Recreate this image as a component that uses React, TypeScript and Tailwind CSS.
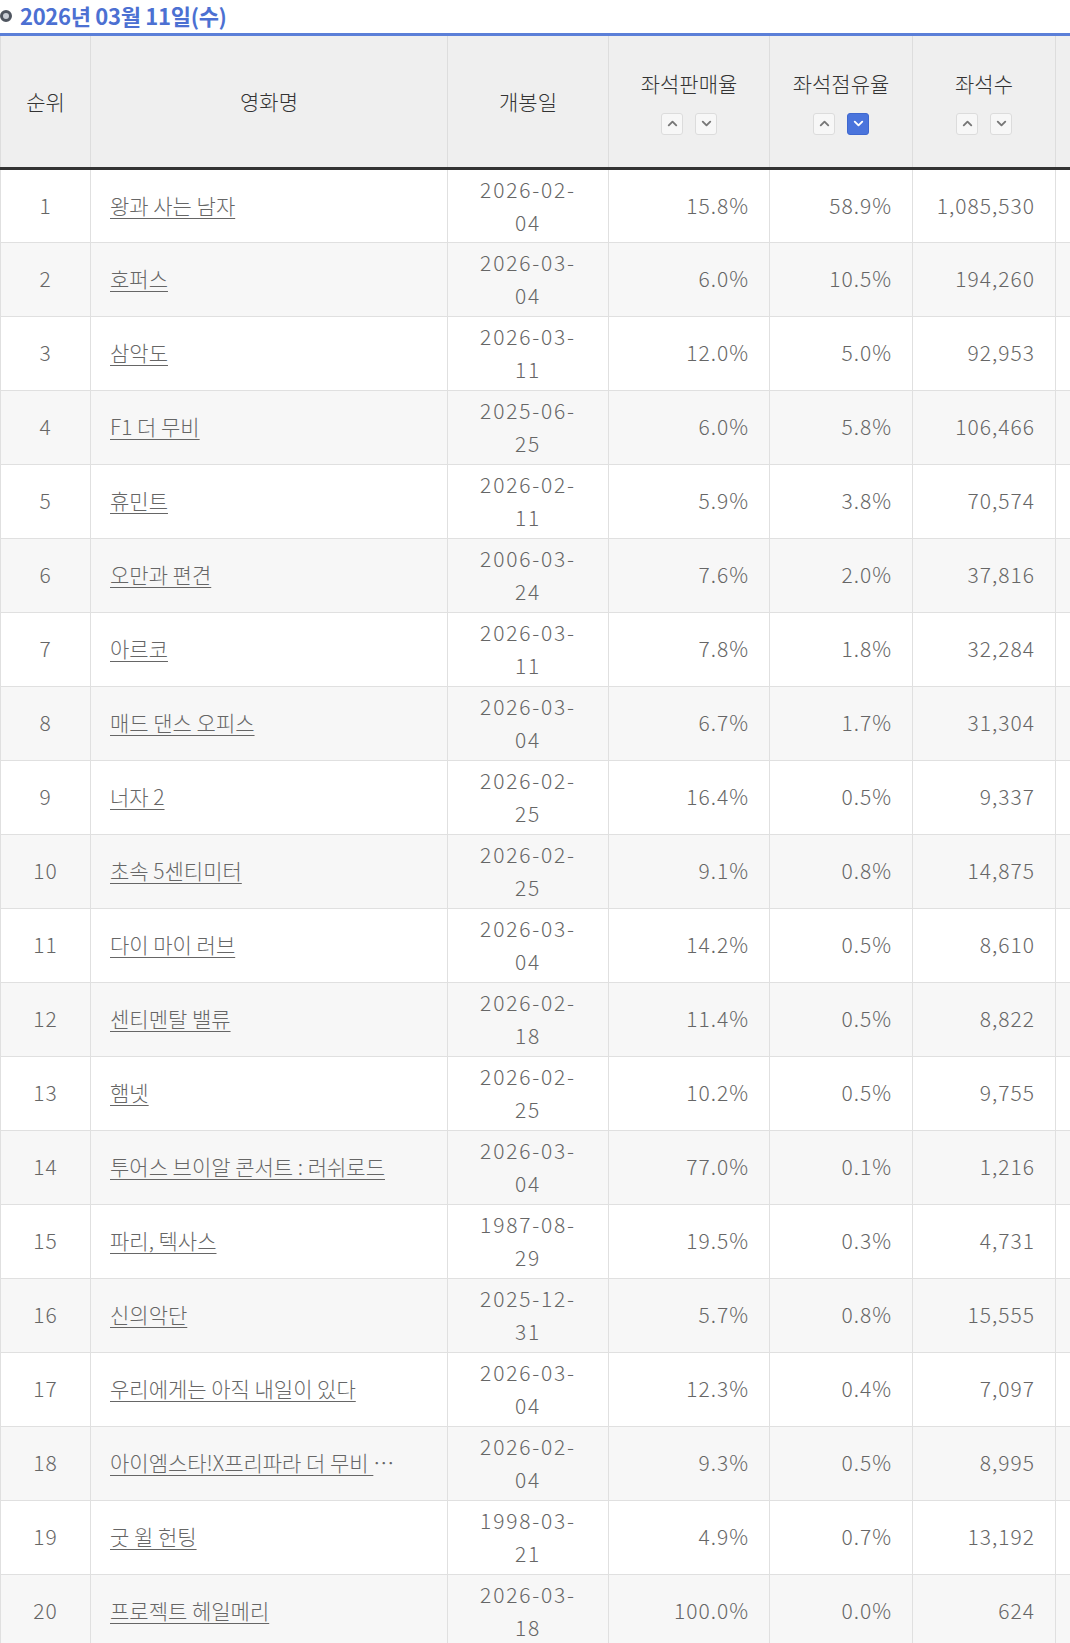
import { ChevronDown, ChevronUp } from 'lucide-react';

interface Movie {
  rank: number;
  title: string;
  date: [string, string];
  sales: string;
  share: string;
  seats: string;
  cut?: boolean;
}

const movies: Movie[] = [
  { rank: 1, title: '왕과 사는 남자', date: ['2026-02-', '04'], sales: '15.8%', share: '58.9%', seats: '1,085,530' },
  { rank: 2, title: '호퍼스', date: ['2026-03-', '04'], sales: '6.0%', share: '10.5%', seats: '194,260' },
  { rank: 3, title: '삼악도', date: ['2026-03-', '11'], sales: '12.0%', share: '5.0%', seats: '92,953' },
  { rank: 4, title: 'F1 더 무비', date: ['2025-06-', '25'], sales: '6.0%', share: '5.8%', seats: '106,466' },
  { rank: 5, title: '휴민트', date: ['2026-02-', '11'], sales: '5.9%', share: '3.8%', seats: '70,574' },
  { rank: 6, title: '오만과 편견', date: ['2006-03-', '24'], sales: '7.6%', share: '2.0%', seats: '37,816' },
  { rank: 7, title: '아르코', date: ['2026-03-', '11'], sales: '7.8%', share: '1.8%', seats: '32,284' },
  { rank: 8, title: '매드 댄스 오피스', date: ['2026-03-', '04'], sales: '6.7%', share: '1.7%', seats: '31,304' },
  { rank: 9, title: '너자 2', date: ['2026-02-', '25'], sales: '16.4%', share: '0.5%', seats: '9,337' },
  { rank: 10, title: '초속 5센티미터', date: ['2026-02-', '25'], sales: '9.1%', share: '0.8%', seats: '14,875' },
  { rank: 11, title: '다이 마이 러브', date: ['2026-03-', '04'], sales: '14.2%', share: '0.5%', seats: '8,610' },
  { rank: 12, title: '센티멘탈 밸류', date: ['2026-02-', '18'], sales: '11.4%', share: '0.5%', seats: '8,822' },
  { rank: 13, title: '햄넷', date: ['2026-02-', '25'], sales: '10.2%', share: '0.5%', seats: '9,755' },
  { rank: 14, title: '투어스 브이알 콘서트 : 러쉬로드', date: ['2026-03-', '04'], sales: '77.0%', share: '0.1%', seats: '1,216' },
  { rank: 15, title: '파리, 텍사스', date: ['1987-08-', '29'], sales: '19.5%', share: '0.3%', seats: '4,731' },
  { rank: 16, title: '신의악단', date: ['2025-12-', '31'], sales: '5.7%', share: '0.8%', seats: '15,555' },
  { rank: 17, title: '우리에게는 아직 내일이 있다', date: ['2026-03-', '04'], sales: '12.3%', share: '0.4%', seats: '7,097' },
  { rank: 18, title: '아이엠스타!X프리파라 더 무비 ', date: ['2026-02-', '04'], sales: '9.3%', share: '0.5%', seats: '8,995', cut: true },
  { rank: 19, title: '굿 윌 헌팅', date: ['1998-03-', '21'], sales: '4.9%', share: '0.7%', seats: '13,192' },
  { rank: 20, title: '프로젝트 헤일메리', date: ['2026-03-', '18'], sales: '100.0%', share: '0.0%', seats: '624' },
];

function SortButtons({ active }: { active?: 'up' | 'down' }) {
  const base = 'flex h-[22px] w-[22px] items-center justify-center rounded-[3px] border';
  const idle = 'border-[#dcdcdc] bg-[#f7f7f7] text-[#777]';
  const on = 'border-[#3f68cf] bg-[#4a74dc] text-white';
  return (
    <div className="mt-[13px] flex justify-center gap-3">
      <span className={`${base} ${active === 'up' ? on : idle}`}>
        <ChevronUp size={15} strokeWidth={3} />
      </span>
      <span className={`${base} ${active === 'down' ? on : idle}`}>
        <ChevronDown size={15} strokeWidth={3} />
      </span>
    </div>
  );
}

export default function App() {
  const th = 'border-x border-[#dddddd] bg-[#efefef] font-light text-[#333]';
  const td = 'border border-[#e0e0e0] text-[#666]';
  const num = `${td} pr-[20px] text-right tracking-[1px]`;

  return (
    <div
      className="w-[1070px] overflow-hidden bg-white"
      style={{ fontFamily: '"Noto Sans CJK KR", "Noto Sans", sans-serif' }}
    >
      <div className="flex h-[36px] items-center gap-[8px] border-b-[3px] border-[#5b7fd8] pb-[2px]">
        <span className="block h-[12px] w-[12px] rounded-full border-[3px] border-[#4f5560] bg-[#c9ced6]" />
        <span className="text-[22px] font-bold tracking-[-0.3px] text-[#4c70d2]">2026년 03월 11일(수)</span>
      </div>

      <table className="w-[1140px] table-fixed border-collapse text-[21px] font-light">
        <colgroup>
          <col className="w-[90px]" />
          <col className="w-[357px]" />
          <col className="w-[161px]" />
          <col className="w-[161px]" />
          <col className="w-[143px]" />
          <col className="w-[143px]" />
          <col className="w-[85px]" />
        </colgroup>
        <thead>
          <tr className="h-[132px] border-b-[3px] border-[#333]">
            <th className={th}>순위</th>
            <th className={th}>영화명</th>
            <th className={th}>개봉일</th>
            <th className={th}>
              <div>좌석판매율</div>
              <SortButtons />
            </th>
            <th className={th}>
              <div>좌석점유율</div>
              <SortButtons active="down" />
            </th>
            <th className={th}>
              <div>좌석수</div>
              <SortButtons />
            </th>
            <th className={th} />
          </tr>
        </thead>
        <tbody>
          {movies.map((m) => (
            <tr key={m.rank} className={`h-[74px] ${m.rank % 2 === 0 ? 'bg-[#f7f7f7]' : 'bg-white'}`}>
              <td className={`${td} text-center tracking-[1px]`}>{m.rank}</td>
              <td className={`${td} px-[19px] text-left`}>
                <a href="#" className="text-[#666] underline decoration-1 underline-offset-[4px]">
                  {m.title}
                </a>
                {m.cut && <span className="text-[#666]">…</span>}
              </td>
              <td className={`${td} text-center leading-[33px] tracking-[1.8px]`}>
                {m.date[0]}
                <br />
                {m.date[1]}
              </td>
              <td className={num}>{m.sales}</td>
              <td className={num}>{m.share}</td>
              <td className={num}>{m.seats}</td>
              <td className={td} />
            </tr>
          ))}
        </tbody>
      </table>
    </div>
  );
}
